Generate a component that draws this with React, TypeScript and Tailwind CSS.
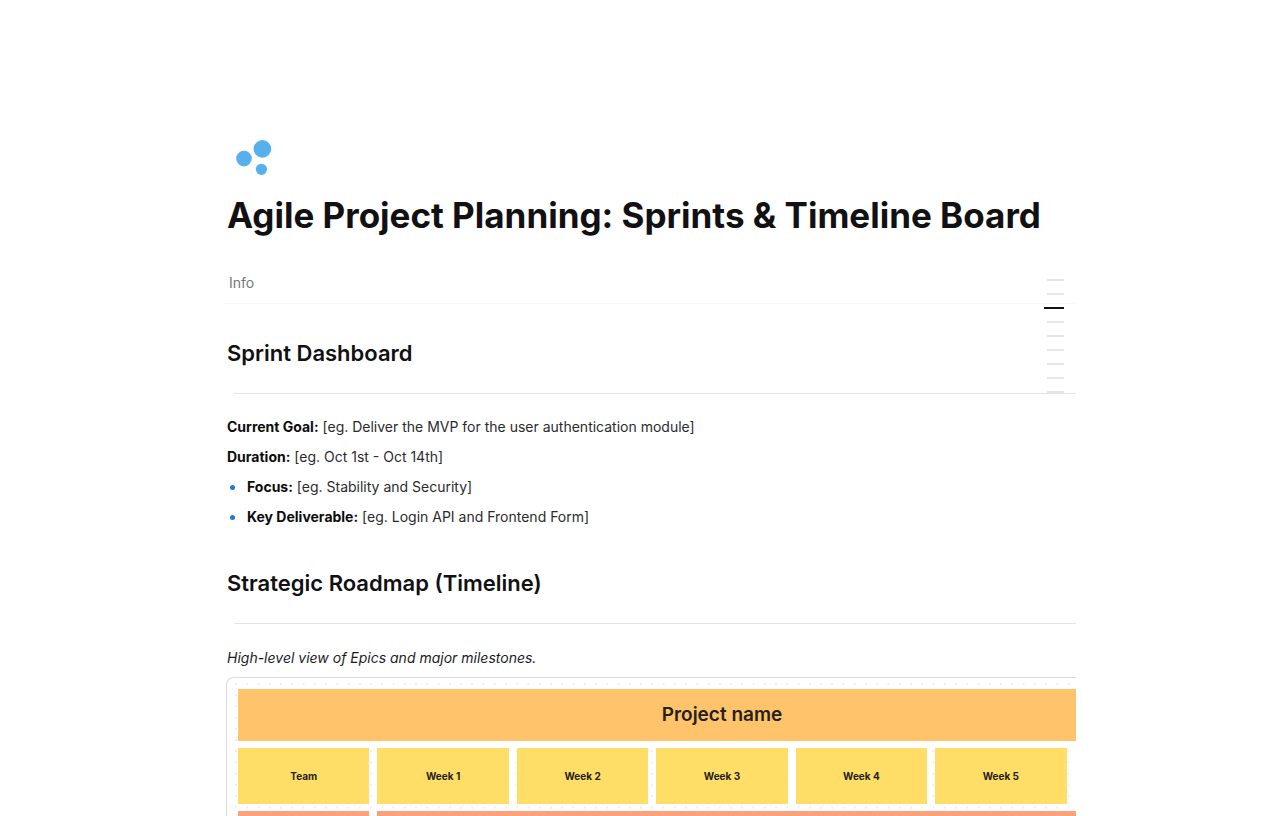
const outline = [
  { id: 'top', label: 'Overview' },
  { id: 'info', label: 'Info' },
  { id: 'sprint', label: 'Sprint Dashboard' },
  { id: 'goal', label: 'Current Goal' },
  { id: 'duration', label: 'Duration' },
  { id: 'focus', label: 'Focus' },
  { id: 'deliverable', label: 'Key Deliverable' },
  { id: 'roadmap', label: 'Strategic Roadmap' },
  { id: 'board', label: 'Timeline' },
];

const columns = ['Team', 'Week 1', 'Week 2', 'Week 3', 'Week 4', 'Week 5'];

function Logo() {
  return (
    <svg className="ml-[7px] h-10 w-10" viewBox="0 0 40 40" fill="#56b0ee" aria-hidden="true">
      <circle cx="10" cy="20.6" r="7.8" />
      <circle cx="28.4" cy="10.9" r="8.8" />
      <circle cx="27.4" cy="31.3" r="5.6" />
    </svg>
  );
}

function SectionHeading({ id, children }: { id: string; children: string }) {
  return (
    <div id={id}>
      <h2 className="text-[22px] leading-8 font-semibold">{children}</h2>
      <hr className="mt-6 ml-[7px] border-[#e3e3e3]" />
    </div>
  );
}

function Field({ id, name, value }: { id: string; name: string; value: string }) {
  return (
    <p id={id}>
      <strong className="font-bold text-[#0c0c0d]">{name}:</strong> {value}
    </p>
  );
}

function Bullet(props: { id: string; name: string; value: string }) {
  return (
    <li className="flex items-center gap-3">
      <span className="ml-[3px] h-[5px] w-[5px] rounded-full bg-[#2378c8]" />
      <Field {...props} />
    </li>
  );
}

function Outline() {
  return (
    <nav aria-label="Outline" className="absolute top-[273px] right-3 flex flex-col items-end">
      {outline.map((item) => (
        <a key={item.id} href={`#${item.id}`} aria-label={item.label} className="flex h-[14px] items-center">
          <span
            className={item.id === 'sprint' ? 'h-[2px] w-5 bg-[#111111]' : 'h-[2px] w-[17px] bg-[#e6e6e6]'}
          />
        </a>
      ))}
    </nav>
  );
}

function Board() {
  return (
    <div id="board" className="relative -ml-px overflow-hidden rounded-tl-lg border-t border-l border-[#dcdcdc]">
      <svg className="absolute inset-0 h-full w-full" aria-hidden="true">
        <defs>
          <pattern id="dots" x="3.4" y="0.2" width="11.25" height="11.25" patternUnits="userSpaceOnUse">
            <circle cx="5.6" cy="5.6" r="0.7" fill="#d0d0d0" />
          </pattern>
        </defs>
        <rect width="100%" height="100%" fill="url(#dots)" />
      </svg>
      <table className="relative mt-1 ml-[3px] w-[984px] table-fixed border-separate border-spacing-x-2 border-spacing-y-[7px] text-center text-[#25211a]">
        <thead>
          <tr>
            <th colSpan={7} className="h-[52px] bg-[#ffc36c] p-0 text-[19px] font-semibold">
              Project name
            </th>
          </tr>
          <tr>
            {columns.map((column) => (
              <th key={column} className="h-14 bg-[#ffde68] p-0 text-[10px] font-bold">
                {column}
              </th>
            ))}
          </tr>
        </thead>
        <tbody>
          <tr>
            <td className="h-14 bg-[#fba27a] p-0" />
            <td colSpan={6} className="h-14 bg-[#fba27a] p-0" />
          </tr>
        </tbody>
      </table>
    </div>
  );
}

export default function App() {
  return (
    <div className="h-screen overflow-hidden bg-white font-['Inter',sans-serif] text-[#111113]">
      <main id="top" className="relative mx-auto max-w-[872px] pt-[138px] pl-[23px]">
        <Logo />
        <h1 className="mt-[13px] text-[35px] leading-[48px] font-[650] whitespace-nowrap">
          Agile Project Planning: Sprints &amp; Timeline Board
        </h1>
        <div id="info" className="-ml-[3px] border-b border-[#f7f7f7] pt-8 pb-2 pl-[5px] text-sm leading-6 text-[#77777a]">
          Info
        </div>

        <section className="pt-[33px]">
          <SectionHeading id="sprint">Sprint Dashboard</SectionHeading>
          <div className="mt-[21px] flex flex-col gap-[6px] text-sm leading-6 text-[#2b2b2d]">
            <Field id="goal" name="Current Goal" value="[eg. Deliver the MVP for the user authentication module]" />
            <Field id="duration" name="Duration" value="[eg. Oct 1st - Oct 14th]" />
            <ul className="flex flex-col gap-[6px]">
              <Bullet id="focus" name="Focus" value="[eg. Stability and Security]" />
              <Bullet id="deliverable" name="Key Deliverable" value="[eg. Login API and Frontend Form]" />
            </ul>
          </div>
        </section>

        <section className="pt-[38px]">
          <SectionHeading id="roadmap">Strategic Roadmap (Timeline)</SectionHeading>
          <p className="mt-[22px] mb-[7px] text-sm leading-6 text-[#1c1c1e] italic">
            High-level view of Epics and major milestones.
          </p>
          <Board />
        </section>
        <Outline />
      </main>
    </div>
  );
}
